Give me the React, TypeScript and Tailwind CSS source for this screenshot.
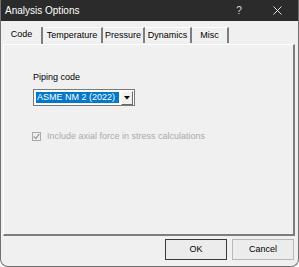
import React from 'react';

const TABS = [
  { label: 'Code',        width: 'w-[41px]', active: true },
  { label: 'Temperature', width: 'w-[60px]', active: false },
  { label: 'Pressure',    width: 'w-[42px]', active: false },
  { label: 'Dynamics',    width: 'w-[47px]', active: false },
  { label: 'Misc',        width: 'w-[37px]', active: false },
];

function TitleBar() {
  return (
    <div className="h-[21px] bg-[#2b2b2b] flex items-center text-white text-[10px] pl-[4px] shrink-0">
      <span className="flex-1">Analysis Options</span>
      <span className="w-[10px] text-center text-[10px] text-[#d8d8d8] mr-[29px]">?</span>
      <svg width="9" height="9" viewBox="0 0 9 9" className="mr-[16px]">
        <path d="M0.5 0.5 L8.5 8.5 M8.5 0.5 L0.5 8.5" stroke="#e0e0e0" strokeWidth="1" />
      </svg>
    </div>
  );
}

function Tabs() {
  return (
    <div className="h-[23px] flex items-end pl-[1px] shrink-0">
      {TABS.map(tab => (
        <div
          key={tab.label}
          className={`${tab.width} flex items-center justify-center text-[9px] text-black border-r-2 border-r-[#7d7d7d] ${
            tab.active ? 'h-[17px] pb-[1px]' : 'h-[16px] mb-[1px] border-t border-t-white'
          }`}
        >
          {tab.label}
        </div>
      ))}
    </div>
  );
}

function Combo() {
  return (
    <div className="w-[102px] h-[17px] border border-[#7a7a7a] bg-white flex items-center pl-[2px] pr-[1px]">
      <div className="w-[83px] h-[11px] bg-[#0078d7] text-white text-[9px] leading-[11px] pl-[1px] whitespace-nowrap">
        ASME NM 2 (2022)
      </div>
      <div className="flex-1" />
      <div className="w-[12px] h-[14px] bg-[#f0f0f0] border border-white border-r-[#6a6a6a] border-b-[#6a6a6a] flex items-center justify-center">
        <svg width="6" height="4" viewBox="0 0 6 4">
          <path d="M0 0 L6 0 L3 3.5 Z" fill="#000" />
        </svg>
      </div>
    </div>
  );
}

function Checkbox() {
  return (
    <div className="flex items-center gap-[6px]">
      <div className="w-[9px] h-[9px] border border-[#a8a8a8] bg-[#f0f0f0] flex items-center justify-center">
        <svg width="7" height="7" viewBox="0 0 7 7">
          <path d="M0.8 3.5 L2.8 5.6 L6.3 0.8" stroke="#9a9a9a" strokeWidth="1.3" fill="none" />
        </svg>
      </div>
      <span className="text-[9px] text-[#aaaaaa]">Include axial force in stress calculations</span>
    </div>
  );
}

export default function App() {
  return (
    <div className="w-[299px] h-[267px] bg-[#f0f0f0] border-x border-b border-[#707070] rounded-b-[8px] overflow-hidden flex flex-col font-['Liberation_Sans',Arial,sans-serif]">
      <TitleBar />
      <Tabs />
      <div className="h-[192px] ml-[2px] mr-[3px] border-l border-t border-white border-r-2 border-b-2 border-r-[#7d7d7d] border-b-[#7d7d7d] pl-[29px] pt-[27px] shrink-0">
        <div className="text-[9px] text-black leading-[11px]">Piping code</div>
        <div className="mt-[6px]">
          <Combo />
        </div>
        <div className="mt-[24px] -ml-[1px]">
          <Checkbox />
        </div>
      </div>
      <div className="flex justify-end gap-[5px] mr-[4px] mt-[3px]">
        <button className="w-[62px] h-[21px] border border-[#3a3a3a] bg-[#ececec] text-[9px] text-black">OK</button>
        <button className="w-[62px] h-[21px] border border-[#b8b8b8] bg-[#ececec] text-[9px] text-black">Cancel</button>
      </div>
    </div>
  );
}
